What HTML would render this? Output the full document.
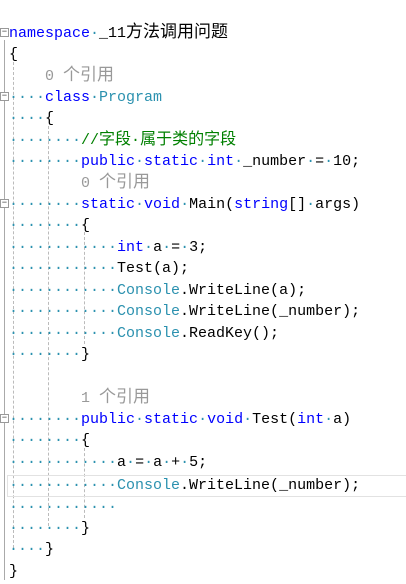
<!DOCTYPE html><html><head><meta charset="utf-8"><style>
body{margin:0;width:406px;height:584px;background:#fff;position:relative;overflow:hidden;font-family:"Liberation Mono","Noto Sans CJK SC",monospace;font-size:15px}
.l{position:absolute;left:9px;height:21px;line-height:21px;white-space:pre;color:#000}
.k{color:#0000ff}.t{color:#2b91af}.c{color:#008000}.r{color:#999}.d{color:#2b91af}
.z{font-size:17px}.y{font-size:16px}
.g{position:absolute;width:0;border-left:1px dashed #bbb}
.m{position:absolute;left:0;width:7px;height:7px;border:1px solid #999;background:#fff;font-size:9px;line-height:7px;text-align:center;color:#333}
</style></head><body>
<div style="position:absolute;left:4px;top:40px;height:540px;border-left:1px solid #aaa"></div>
<div class="g" style="left:13px;top:62px;height:486px"></div>
<div class="g" style="left:48px;top:126px;height:400px"></div>
<div class="g" style="left:84px;top:232px;height:112px"></div>
<div class="g" style="left:84px;top:448px;height:70px"></div>
<div style="position:absolute;left:7px;top:475px;width:400px;height:20px;border:1px solid #e2e2e2"></div>
<div class="m" style="top:28px">−</div>
<div class="m" style="top:92px">−</div>
<div class="m" style="top:199px">−</div>
<div class="m" style="top:414px">−</div>
<div class="l" style="top:23px"><span class="k">namespace</span><span class="d">·</span>_11<span class="z">方法调用问题</span></div>
<div class="l" style="top:44px">{</div>
<div class="l r" style="top:66px">    0 <span class="z">个引用</span></div>
<div class="l" style="top:87px"><span class="d">····</span><span class="k">class</span><span class="d">·</span><span class="t">Program</span></div>
<div class="l" style="top:108px"><span class="d">····</span>{</div>
<div class="l" style="top:130px"><span class="d">········</span><span class="c">//<span class="y">字段</span>·<span class="y">属于类的字段</span></span></div>
<div class="l" style="top:151px"><span class="d">········</span><span class="k">public</span><span class="d">·</span><span class="k">static</span><span class="d">·</span><span class="k">int</span><span class="d">·</span>_number<span class="d">·</span>=<span class="d">·</span>10;</div>
<div class="l r" style="top:173px">        0 <span class="z">个引用</span></div>
<div class="l" style="top:194px"><span class="d">········</span><span class="k">static</span><span class="d">·</span><span class="k">void</span><span class="d">·</span>Main(<span class="k">string</span>[]<span class="d">·</span>args)</div>
<div class="l" style="top:215px"><span class="d">········</span>{</div>
<div class="l" style="top:237px"><span class="d">············</span><span class="k">int</span><span class="d">·</span>a<span class="d">·</span>=<span class="d">·</span>3;</div>
<div class="l" style="top:258px"><span class="d">············</span>Test(a);</div>
<div class="l" style="top:280px"><span class="d">············</span><span class="t">Console</span>.WriteLine(a);</div>
<div class="l" style="top:301px"><span class="d">············</span><span class="t">Console</span>.WriteLine(_number);</div>
<div class="l" style="top:323px"><span class="d">············</span><span class="t">Console</span>.ReadKey();</div>
<div class="l" style="top:344px"><span class="d">········</span>}</div>
<div class="l r" style="top:388px">        1 <span class="z">个引用</span></div>
<div class="l" style="top:409px"><span class="d">········</span><span class="k">public</span><span class="d">·</span><span class="k">static</span><span class="d">·</span><span class="k">void</span><span class="d">·</span>Test(<span class="k">int</span><span class="d">·</span>a)</div>
<div class="l" style="top:430px"><span class="d">········</span>{</div>
<div class="l" style="top:452px"><span class="d">············</span>a<span class="d">·</span>=<span class="d">·</span>a<span class="d">·</span>+<span class="d">·</span>5;</div>
<div class="l" style="top:475px"><span class="d">············</span><span class="t">Console</span>.WriteLine(_number);</div>
<div class="l" style="top:497px"><span class="d">············</span></div>
<div class="l" style="top:518px"><span class="d">········</span>}</div>
<div class="l" style="top:539px"><span class="d">····</span>}</div>
<div class="l" style="top:561px">}</div>
</body></html>
